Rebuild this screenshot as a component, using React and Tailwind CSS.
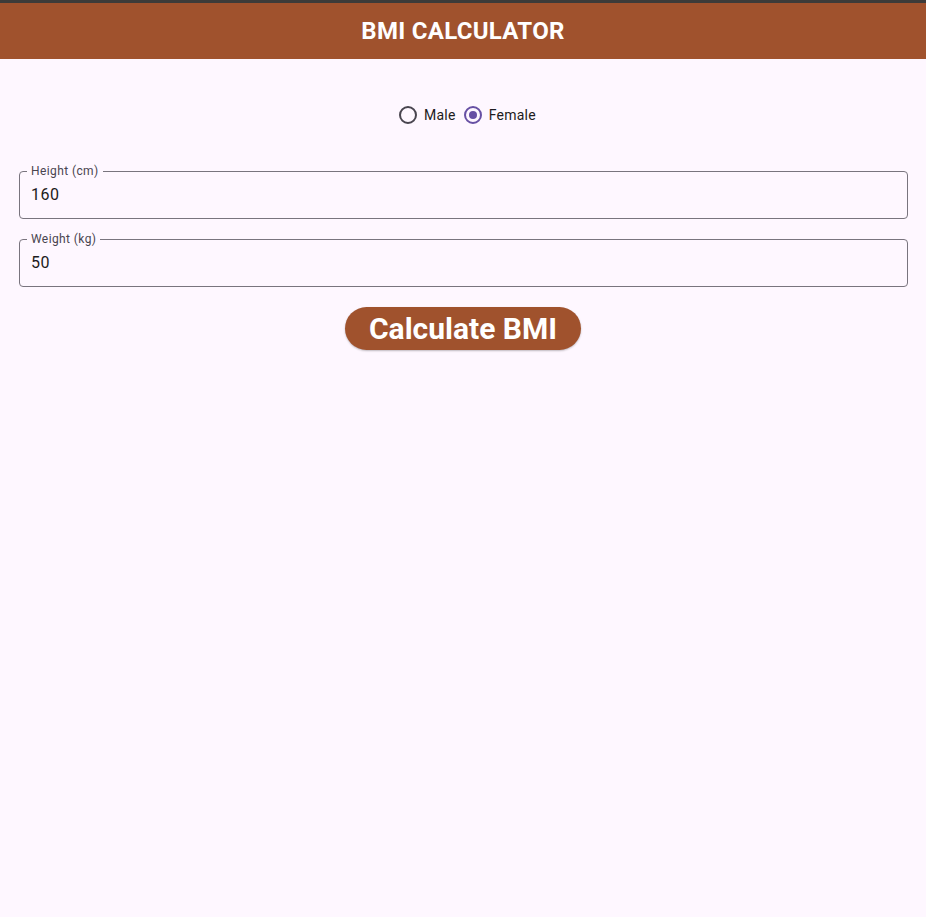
import { useState } from "react";

function Radio({ label, checked, onClick }) {
  return (
    <button onClick={onClick} className="flex items-center gap-[7px]">
      <span
        className={`flex h-[18px] w-[18px] items-center justify-center rounded-full border-2 ${
          checked ? "border-[#6750a4]" : "border-[#49454f]"
        }`}
      >
        {checked && <span className="h-[8px] w-[8px] rounded-full bg-[#6750a4]" />}
      </span>
      <span className="text-[14px] leading-5 tracking-[0.25px] text-[#1d1b20]">{label}</span>
    </button>
  );
}

function Field({ label, value, onChange }) {
  return (
    <fieldset className="h-[56px] rounded border border-[#79747e] pl-[11px] pr-3">
      <legend className="-ml-[4px] px-[4px] text-[12px] leading-4 tracking-[0.4px] text-[#49454f]">{label}</legend>
      <input
        value={value}
        onChange={(e) => onChange(e.target.value)}
        className="mt-[4px] w-full bg-transparent text-[16px] leading-6 tracking-[0.5px] text-[#1d1b20] outline-none"
      />
    </fieldset>
  );
}

export default function App() {
  const [gender, setGender] = useState("female");
  const [height, setHeight] = useState("160");
  const [weight, setWeight] = useState("50");

  return (
    <div className="flex min-h-[917px] flex-col bg-[#fef7ff] font-['Roboto',sans-serif]">
      <div className="h-[3px] bg-[#3d3b39]" />
      <header className="flex h-[56px] items-center justify-center bg-[#a0522d]">
        <h1 className="text-[24px] font-bold tracking-[0.3px] text-white">BMI CALCULATOR</h1>
      </header>

      <div className="mt-[46px] flex justify-center gap-[8px] pl-[9px]">
        <Radio label="Male" checked={gender === "male"} onClick={() => setGender("male")} />
        <Radio label="Female" checked={gender === "female"} onClick={() => setGender("female")} />
      </div>

      <div className="mt-[38px] flex flex-col gap-[12px] pl-[19px] pr-[18px]">
        <Field label="Height (cm)" value={height} onChange={setHeight} />
        <Field label="Weight (kg)" value={weight} onChange={setWeight} />
      </div>

      <div className="mt-[20px] flex justify-center">
        <button className="h-[43px] rounded-full bg-[#a0522d] px-6 text-[30px] font-bold leading-none text-white shadow-[0_1px_2px_rgba(0,0,0,0.25)]">
          Calculate BMI
        </button>
      </div>
    </div>
  );
}
